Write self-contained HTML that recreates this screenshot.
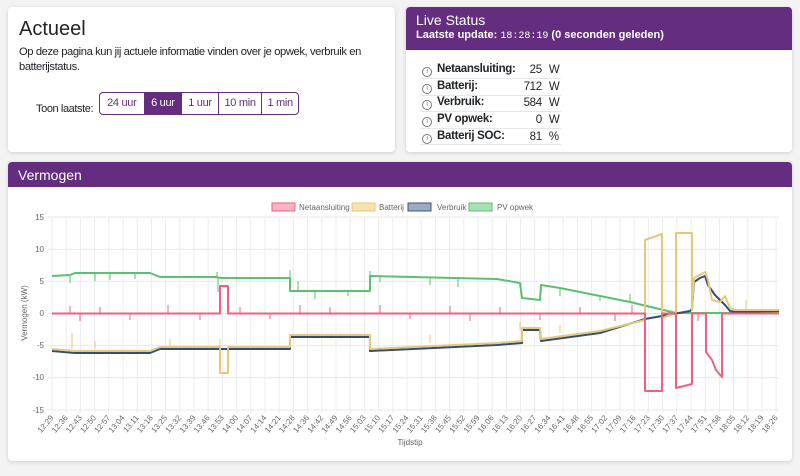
<!DOCTYPE html>
<html><head><meta charset="utf-8"><style>
*{box-sizing:border-box;margin:0;padding:0}
body{width:800px;height:476px;background:#f3f3f3;font-family:"Liberation Sans",Arial,sans-serif;color:#212529;position:relative;overflow:hidden}
.card{position:absolute;background:#fff;border-radius:4px;box-shadow:0 1px 4px rgba(0,0,0,.15);overflow:hidden}
.hdr{background:#652d80;color:#fff}
.btns{position:absolute;display:flex;height:23px;border:1px solid #652d80;border-radius:4px;overflow:hidden}
.btns div{font-size:11px;letter-spacing:-0.3px;color:#652d80;text-align:center;line-height:21px;border-left:1px solid #652d80}
.btns div:first-child{border-left:none}
.btns .on{background:#652d80;color:#fff}
table{position:absolute;left:14px;top:55px;border-collapse:collapse;font-size:11.5px;letter-spacing:-0.3px}
td{height:16.6px;border-bottom:1px solid #e6e6e6;padding:0 2px}
td.l{font-weight:bold}
td.v{text-align:right;padding-left:6px;padding-right:5px}
.i{display:inline-block;width:10px;height:10px;border:1px solid #777;border-radius:50%;font-size:7px;line-height:8px;text-align:center;color:#777;margin-right:5px;vertical-align:-1px;font-weight:normal}
</style></head><body>
<div class="card" style="left:8px;top:7px;width:387px;height:145px">
<div style="position:absolute;left:11px;top:11px;font-size:20px">Actueel</div>
<div style="position:absolute;left:11px;top:38px;font-size:11.2px;letter-spacing:-0.4px;line-height:15px;white-space:nowrap">Op deze pagina kun jij actuele informatie vinden over je opwek, verbruik en<br>batterijstatus.</div>
<div style="position:absolute;left:28px;top:96px;font-size:11px;letter-spacing:-0.4px">Toon laatste:</div>
<div class="btns" style="left:91px;top:85px;width:200px"><div style="width:44px">24 uur</div><div class="on" style="width:38px">6 uur</div><div style="width:37px">1 uur</div><div style="width:44px">10 min</div><div style="width:37px">1 min</div></div>
</div>
<div class="card" style="left:406px;top:7px;width:386px;height:145px">
<div class="hdr" style="height:43px;padding:5px 10px">
<div style="font-size:14px;line-height:16px">Live Status</div>
<div style="font-size:11px;font-weight:bold;line-height:14px">Laatste update: <span style="font-family:'Liberation Mono',monospace;font-weight:normal;font-size:10px">18:28:19</span> (0 seconden geleden)</div>
</div>
<table>
<tr><td class="l"><span class="i">i</span>Netaansluiting:</td><td class="v">25</td><td>W</td></tr>
<tr><td class="l"><span class="i">i</span>Batterij:</td><td class="v">712</td><td>W</td></tr>
<tr><td class="l"><span class="i">i</span>Verbruik:</td><td class="v">584</td><td>W</td></tr>
<tr><td class="l"><span class="i">i</span>PV opwek:</td><td class="v">0</td><td>W</td></tr>
<tr><td class="l"><span class="i">i</span>Batterij SOC:</td><td class="v">81</td><td>%</td></tr>
</table>
</div>
<div class="card" style="left:8px;top:162px;width:784px;height:299px">
<div class="hdr" style="height:25px;padding:5px 10px;font-size:14px">Vermogen</div>
</div>
<svg style="position:absolute;left:0;top:0" width="800" height="476" font-family="Liberation Sans, Arial, sans-serif">
<g font-size="8" fill="#666">
<rect x="272" y="203" width="23" height="8" fill="#f7b4c2" stroke="#f06080"/><text x="299" y="210">Netaansluiting</text>
<rect x="352" y="203" width="23" height="8" fill="#f5e2b0" stroke="#e8c878"/><text x="379" y="210">Batterij</text>
<rect x="408" y="203" width="23" height="8" fill="#9aabc2" stroke="#3a5a80"/><text x="437" y="210">Verbruik</text>
<rect x="469" y="203" width="23" height="8" fill="#a8e0b4" stroke="#5cc070"/><text x="497" y="210">PV opwek</text>
</g>
<g stroke="#e8e8e8" stroke-width="1">
<line x1="48" y1="217" x2="779" y2="217"/><line x1="48" y1="249.2" x2="779" y2="249.2"/><line x1="48" y1="281.3" x2="779" y2="281.3"/><line x1="48" y1="313.5" x2="779" y2="313.5"/><line x1="48" y1="345.6" x2="779" y2="345.6"/><line x1="48" y1="377.8" x2="779" y2="377.8"/><line x1="48" y1="410" x2="779" y2="410"/>
</g>
<g id="vg" stroke="#ececec"></g>
<g font-size="8" fill="#666" text-anchor="end">
<text x="44" y="220">15</text><text x="44" y="252">10</text><text x="44" y="284">5</text><text x="44" y="316">0</text><text x="44" y="348">-5</text><text x="44" y="380">-10</text><text x="44" y="413">-15</text>
</g>
<text x="27" y="313" font-size="8" fill="#666" text-anchor="middle" transform="rotate(-90 27 313)">Vermogen (kW)</text>
<text x="410" y="445" font-size="8" fill="#666" text-anchor="middle">Tijdstip</text>
<g id="xl" font-size="8" fill="#666" text-anchor="end"></g>
<g fill="none" stroke-width="2" stroke-linejoin="round">
<polyline stroke="#5cc070" points="52,276 70,275 75,273 150,273 160,277 215,277 222,278 290,278 290,291 370,291 370,276 497,279 520,283 522,298 540,300 541,285 560,288 630,302 676,313 779,313"/>
<polyline stroke="#2f4f78" points="52,351 75,353 150,353 160,349 290,349 290,337 370,337 370,351 497,345 522,343 522,330 540,330 541,341 600,333 645,319 690,311 692,309 694,282 700,278 705,276 708,285 715,295 720,300 725,305 730,311 735,312 779,311"/>
<polyline stroke="#e8c878" points="52,349 75,351 150,351 160,347 220,347 220,373 228,373 228,347 290,347 290,335 370,335 370,349 497,343 522,341 522,328 540,328 541,339 600,331 645,320 645,240 662,234 662,318 676,313 676,233 692,233 692,310 694,278 705,272 708,280 712,300 720,302 725,296 730,308 735,310 779,310"/>
<polyline stroke="#f06080" points="52,313.5 220,313.5 220,286 228,286 228,313.5 645,313.5 645,391 662,391 662,313.5 676,313.5 676,388 692,384 692,313.5 706,313.5 706,352 712,360 716,370 722,377 722,313.5 779,313.5"/>
</g>
<g stroke-width="1">
<path stroke="#5cc070" d="M70 275v8M95 273v8M110 273v7M135 273v6M217 277v-5M218 278v14M290 278v-8M298 291v-10M315 291v8M348 291v5M370 276v-5M380 276v6M430 277v8M458 279v8M521 283v8M560 288v8M600 295v6M630 302v-8"/>
<path stroke="#f06080" d="M70 313v-7M80 313v8M100 313v-6M130 313v7M168 313v-8M200 313v7M240 313v-6M270 313v6M300 313v-8M330 313v-6M380 313v-8M410 313v6M450 313v-7M470 313v8M500 313v-6M540 313v7M580 313v-6M615 313v8M632 313v-8M698 313v8"/>
<path stroke="#e8c878" d="M72 349v-16M95 349v-8M170 347v-8M220 347v-8M430 343v-8M520 330v-8M560 333v-8M746 310v-10"/>
</g>
</svg>
<script>
var vg=document.getElementById('vg'),xl=document.getElementById('xl');
var L="12:29 12:36 12:43 12:50 12:57 13:04 13:11 13:18 13:25 13:32 13:39 13:46 13:53 14:00 14:07 14:14 14:21 14:28 14:36 14:42 14:49 14:56 15:03 15:10 15:17 15:24 15:31 15:38 15:45 15:52 15:59 16:06 16:13 16:20 16:27 16:34 16:41 16:48 16:55 17:02 17:09 17:16 17:23 17:30 17:37 17:44 17:51 17:58 18:05 18:12 18:19 18:26".split(' ');
var h='',t='';
for(var i=0;i<L.length;i++){var x=52+i*14.2;
h+='<line x1="'+x+'" y1="217" x2="'+x+'" y2="413"/>';
t+='<text x="'+(x+2)+'" y="418" transform="rotate(-50 '+(x+2)+' 418)">'+L[i]+'</text>';}
vg.innerHTML=h;xl.innerHTML=t;
</script>
</body></html>
